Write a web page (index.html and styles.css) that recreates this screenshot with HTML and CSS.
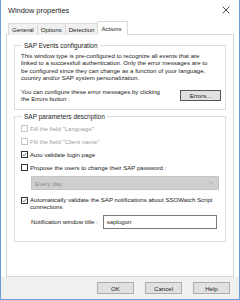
FILE: index.html
```html
<!DOCTYPE html>
<html lang="en">
  <head>
    <meta charset="UTF-8" />
    <title>Window properties</title>
    <link rel="stylesheet" href="styles.css">
  </head>
  <body>
    <div class="window">
      <div class="title-bar">
        <span class="title">Window properties</span>
        <svg class="close" width="8" height="8" viewBox="0 0 8 8">
          <path d="M0.5 0.5 L7.5 7.5 M7.5 0.5 L0.5 7.5" stroke="#333" stroke-width="0.9" fill="none" />
        </svg>
      </div>

      <div class="client">
        <div class="tabs">
          <div class="tab">General</div>
          <div class="tab">Options</div>
          <div class="tab">Detection</div>
          <div class="tab active">Actions</div>
        </div>

        <div class="panel">
          <fieldset class="group group-events">
            <legend>SAP Events configuration</legend>
            <p class="desc">
              This window type is pre-configured to recognize all events that are<br>
              linked to a successfull authentication. Only the error messages are to<br>
              be configured since they can change as a function of your language,<br>
              country and/or SAP system personalization.
            </p>
            <div class="errors-row">
              <p class="desc">You can configure these error messages by clicking<br>the Errors button :</p>
              <div class="btn btn-errors">Errors...</div>
            </div>
          </fieldset>

          <fieldset class="group group-params">
            <legend>SAP parameters description</legend>
            <div class="check disabled"><span class="box"></span>Fill the field "Language"</div>
            <div class="check disabled"><span class="box"></span>Fill the field "Client name"</div>
            <div class="check">
              <span class="box">
                <svg width="7" height="7" viewBox="0 0 7 7"><path d="M1 3.6 L2.8 5.4 L6 1.4" stroke="#222" stroke-width="0.9" fill="none" /></svg>
              </span>Auto validate login page
            </div>
            <div class="check"><span class="box"></span>Propose the users to change their SAP password :</div>
            <div class="select">
              <span>Every day</span>
              <svg width="6" height="4" viewBox="0 0 6 4"><path d="M0.5 0.8 L3 3.2 L5.5 0.8" stroke="#aaa" stroke-width="0.8" fill="none" /></svg>
            </div>
            <div class="check multi">
              <span class="box">
                <svg width="7" height="7" viewBox="0 0 7 7"><path d="M1 3.6 L2.8 5.4 L6 1.4" stroke="#222" stroke-width="0.9" fill="none" /></svg>
              </span>
              <span>Automatically validate the SAP notifications about SSOWatch Script<br>connections</span>
            </div>
            <div class="notif-row">
              <span class="label">Notification window title :</span>
              <div class="input">saplogon</div>
            </div>
          </fieldset>
        </div>

        <div class="buttons">
          <div class="btn">OK</div>
          <div class="btn">Cancel</div>
          <div class="btn">Help</div>
        </div>
      </div>
    </div>
  </body>
</html>
```

FILE: styles.css
```css
* {
  margin: 0;
  padding: 0;
  box-sizing: border-box;
  font-family: "Liberation Sans", Arial, sans-serif;
}

body {
  width: 240px;
  height: 300px;
  background: #fff;
  font-size: 6.1px;
  color: #1a1a1a;
}

.window {
  width: 240px;
  height: 300px;
  border: 1px solid #6b9bd8;
  border-top: none;
  background: #f0f0f0;
  display: flex;
  flex-direction: column;
}

.title-bar {
  height: 20px;
  background: #fff;
  display: flex;
  align-items: center;
  justify-content: space-between;
  padding: 0 9px 0 7px;
}

.title {
  font-size: 7.4px;
  color: #222;
}

.client {
  flex: 1;
  display: flex;
  flex-direction: column;
  padding: 0 5px 0 5px;
  background: #fff;
}

.tabs {
  display: flex;
  align-items: flex-end;
  height: 14px;
  padding-left: 2px;
  position: relative;
  top: 1px;
}

.tab {
  height: 12px;
  padding: 0 3px;
  display: flex;
  align-items: center;
  background: #f0f0f0;
  border: 1px solid #d9d9d9;
  border-bottom: none;
  margin-right: -1px;
  color: #222;
}

.tab.active {
  height: 14px;
  background: #fff;
  padding: 0 6px 0 3px;
  position: relative;
  z-index: 1;
}

.panel {
  height: 243px;
  background: #fff;
  border: 1px solid #d9d9d9;
  padding: 7px 7px 0 7px;
  display: flex;
  flex-direction: column;
  gap: 3px;
}

.group {
  border: 1px solid #dcdcdc;
  padding: 0 6px 0 6px;
}

.group legend {
  padding: 0 2px;
  margin-left: 1px;
  color: #222;
  font-size: 6.5px;
}

.desc {
  line-height: 7.4px;
  white-space: nowrap;
}

.group-events {
  height: 68px;
  padding-top: 3px;
}

.errors-row {
  display: flex;
  align-items: flex-start;
  justify-content: space-between;
  margin-top: 6px;
}

.btn {
  width: 37px;
  height: 12px;
  background: #e1e1e1;
  border: 1px solid #adadad;
  display: flex;
  align-items: center;
  justify-content: center;
  color: #222;
}

.btn-errors {
  width: 41px;
  height: 11px;
  margin-top: 2px;
  margin-right: -2px;
  border-color: #555;
}

.group-params {
  height: 129px;
  padding-top: 2px;
  display: flex;
  flex-direction: column;
}

.check {
  display: flex;
  align-items: center;
  gap: 2px;
  height: 13px;
  white-space: nowrap;
}

.check .box {
  width: 7px;
  height: 7px;
  border: 1px solid #333;
  display: flex;
  align-items: center;
  justify-content: center;
  flex-shrink: 0;
  background: #fff;
}

.check.disabled {
  color: #a0a0a0;
}

.check.disabled .box {
  border-color: #c6c6c6;
}

.select {
  margin: 2px 0 4px 10px;
  height: 14px;
  width: 188px;
  background: #cfcfcf;
  border: 1px solid #c4c4c4;
  display: flex;
  align-items: center;
  justify-content: space-between;
  padding: 0 4px 0 3px;
  color: #8a8a8a;
}

.check.multi {
  height: auto;
  align-items: flex-start;
  line-height: 7.4px;
  margin-top: 2px;
}

.check.multi .box {
  margin-top: 1px;
}

.notif-row {
  display: flex;
  align-items: center;
  gap: 5px;
  margin: 4px 0 0 10px;
}

.label {
  white-space: nowrap;
}

.input {
  width: 114px;
  height: 14px;
  border: 1px solid #7a7a7a;
  display: flex;
  align-items: center;
  padding-left: 3px;
}

.buttons {
  flex: 1;
  display: flex;
  align-items: center;
  justify-content: flex-end;
  gap: 11px;
  background: #f0f0f0;
  margin: 0 -5px;
  padding: 0 9px 0 0;
}
```
